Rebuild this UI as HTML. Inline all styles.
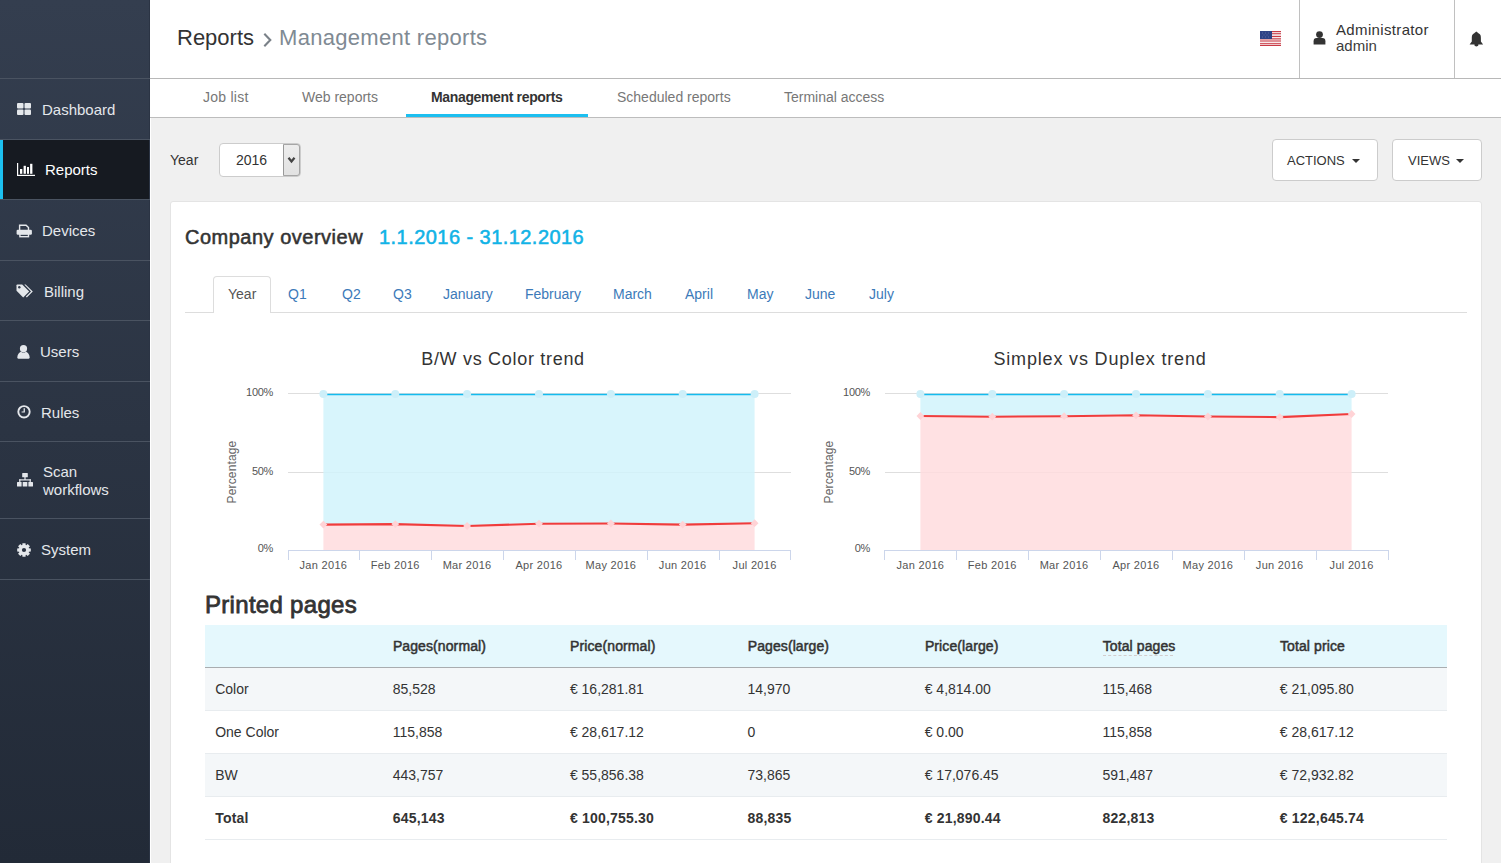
<!DOCTYPE html>
<html><head><meta charset="utf-8">
<style>
*{box-sizing:border-box;margin:0;padding:0}
html,body{width:1501px;height:863px;overflow:hidden;background:#f0f0f0;font-family:"Liberation Sans",sans-serif;color:#333}
.abs{position:absolute}
#side{position:absolute;left:0;top:0;width:150px;height:863px;background:linear-gradient(#343e4f,#222a37);border-right:1px solid #2b3444}
.sep{position:absolute;left:0;width:150px;height:1px;background:#4a5361;z-index:2}
.nav{position:absolute;left:0;width:149px;color:#e4e7eb;font-size:15px;line-height:17px}
.nav .t{position:absolute;white-space:nowrap}
.btn{position:absolute;top:139px;height:42px;background:#fff;border:1px solid #ccc;border-radius:4px;font-size:13px;color:#333}
.btn span{position:absolute;top:13px;white-space:nowrap}
.caret{position:absolute;top:19px;width:0;height:0;border-left:4px solid transparent;border-right:4px solid transparent;border-top:4px solid #333}
#card{position:absolute;left:170px;top:201px;width:1312px;height:700px;background:#fff;border:1px solid #e4e4e4;border-radius:3px}
.pt{position:absolute;top:286px;font-size:14px;line-height:16px;color:#3c7ab9;white-space:nowrap}
.nav svg{position:absolute;fill:#e4e7eb}
#hdr{position:absolute;left:150px;top:0;width:1351px;height:79px;background:#fff;border-bottom:1px solid #b8b8b8}
#tabs{position:absolute;left:150px;top:79px;width:1351px;height:39px;background:#fff;border-bottom:1px solid #bdbdbd}
.tab{position:absolute;top:10px;font-size:14px;line-height:16px;color:#777;white-space:nowrap}
.th{position:absolute;top:638px;font-size:14px;line-height:16px;letter-spacing:0.1px;-webkit-text-stroke:0.5px #333;color:#333;white-space:nowrap}
.td{position:absolute;font-size:14px;line-height:16px;color:#333;white-space:nowrap}
.td.b{font-weight:bold;letter-spacing:0.2px}
</style></head><body>
<div id="side">
  <div class="sep" style="top:78px"></div>
  <div class="nav" style="top:79px;height:60px">
    <svg style="left:17px;top:24px" width="14" height="12" viewBox="0 0 14 12"><rect x="0" y="0" width="6.5" height="5.5" rx="1"/><rect x="7.5" y="0" width="6.5" height="5.5" rx="1"/><rect x="0" y="6.5" width="6.5" height="5.5" rx="1"/><rect x="7.5" y="6.5" width="6.5" height="5.5" rx="1"/></svg>
    <span class="t" style="left:42px;top:22px">Dashboard</span>
  </div>
  <div class="sep" style="top:139px"></div>
  <div class="nav" style="top:140px;height:59px;background:#161a21;color:#fff">
    <div class="abs" style="left:0;top:0;width:3px;height:59px;background:#1cc0f0"></div>
    <svg style="left:17px;top:23px;fill:#fff" width="18" height="13" viewBox="0 0 18 13"><rect x="0" y="0" width="1.2" height="13"/><rect x="0" y="11.8" width="18" height="1.2"/><rect x="3" y="6" width="2.3" height="4.8"/><rect x="6.6" y="2.8" width="2.3" height="8"/><rect x="10" y="4" width="2" height="6.8"/><rect x="13.1" y="0.8" width="2.3" height="10"/></svg>
    <span class="t" style="left:45px;top:21px">Reports</span>
  </div>
  <div class="sep" style="top:199px"></div>
  <div class="nav" style="top:200px;height:60px">
    <svg style="left:16px;top:24px" width="17" height="14" viewBox="0 0 17 14"><path d="M3.6 6V1.2H10.1L12.5 3.6V6" fill="none" stroke="#e4e7eb" stroke-width="1.4"/><rect x="0.6" y="5.8" width="15.3" height="5" rx="1.2"/><rect x="3.9" y="9.6" width="8.6" height="3.1" fill="none" stroke="#e4e7eb" stroke-width="1.4"/></svg>
    <span class="t" style="left:42px;top:22px">Devices</span>
  </div>
  <div class="sep" style="top:260px"></div>
  <div class="nav" style="top:261px;height:59px">
    <svg style="left:16px;top:23px" width="18" height="15" viewBox="0 0 18 15"><path d="M0.5 1.3Q0.5 0.5 1.3 0.5H6.2L13.2 7.5 7.2 13.5 0.5 6.8z"/><path d="M8.3 0.5H9.6L16.8 7.5 10.8 13.5 9.9 12.6 15 7.5z"/><circle cx="3.3" cy="3.3" r="1.2" fill="#323b4a"/></svg>
    <span class="t" style="left:44px;top:22px">Billing</span>
  </div>
  <div class="sep" style="top:320px"></div>
  <div class="nav" style="top:321px;height:60px">
    <svg style="left:16.5px;top:23.5px" width="13" height="14" viewBox="0 0 13 14"><circle cx="6.5" cy="3.7" r="3.6"/><path d="M0.3 12.6C0.3 9.3 2.2 7.2 4 6.7 4.8 7.3 5.6 7.6 6.5 7.6S8.2 7.3 9 6.7C10.8 7.2 12.7 9.3 12.7 12.6 12.7 13.3 12.3 13.7 11.6 13.7H1.4C.7 13.7.3 13.3.3 12.6z"/></svg>
    <span class="t" style="left:40px;top:22px">Users</span>
  </div>
  <div class="sep" style="top:381px"></div>
  <div class="nav" style="top:382px;height:59px">
    <svg style="left:16.5px;top:23px" width="14" height="14" viewBox="0 0 14 14"><circle cx="7" cy="6.8" r="5.7" fill="none" stroke="#e4e7eb" stroke-width="1.9"/><path d="M6.6 3.3h1.3v4.3H4.6V6.4h2z"/></svg>
    <span class="t" style="left:41px;top:22px">Rules</span>
  </div>
  <div class="sep" style="top:441px"></div>
  <div class="nav" style="top:442px;height:76px">
    <svg style="left:16.5px;top:30.5px" width="16" height="14" viewBox="0 0 16 14"><rect x="5.2" y="0" width="5.6" height="4.3" rx="0.6"/><rect x="7.4" y="4" width="1.2" height="3"/><rect x="2.2" y="6.3" width="11.6" height="1.2"/><rect x="2.2" y="6.3" width="1.2" height="3"/><rect x="12.6" y="6.3" width="1.2" height="3"/><rect x="0" y="9" width="4.6" height="4.6" rx="0.5"/><rect x="5.7" y="9" width="4.6" height="4.6" rx="0.5"/><rect x="11.4" y="9" width="4.6" height="4.6" rx="0.5"/></svg>
    <span class="t" style="left:43px;top:21px;line-height:18px">Scan<br>workflows</span>
  </div>
  <div class="sep" style="top:518px"></div>
  <div class="nav" style="top:519px;height:60px">
    <svg style="left:16.5px;top:23.5px" width="14" height="14" viewBox="0 0 14 14"><path fill-rule="evenodd" d="M11.92 5.31 L13.82 5.43 L13.82 8.57 L11.92 8.69 L11.67 9.28 L12.94 10.71 L10.71 12.94 L9.28 11.67 L8.69 11.92 L8.57 13.82 L5.43 13.82 L5.31 11.92 L4.72 11.67 L3.29 12.94 L1.06 10.71 L2.33 9.28 L2.08 8.69 L0.18 8.57 L0.18 5.43 L2.08 5.31 L2.33 4.72 L1.06 3.29 L3.29 1.06 L4.72 2.33 L5.31 2.08 L5.43 0.18 L8.57 0.18 L8.69 2.08 L9.28 2.33 L10.71 1.06 L12.94 3.29 L11.67 4.72Z M7 4.9A2.1 2.1 0 1 0 7 9.1A2.1 2.1 0 1 0 7 4.9Z"/></svg>
    <span class="t" style="left:41px;top:22px">System</span>
  </div>
  <div class="sep" style="top:579px"></div>
</div>

<div id="hdr">
  <div class="abs" style="left:27px;top:25px;font-size:22px;line-height:25px;white-space:nowrap;color:#333">Reports</div>
  <svg class="abs" style="left:113px;top:33px" width="9" height="14" viewBox="0 0 9 14"><path d="M1.3 0.8l6 6.2-6 6.2" fill="none" stroke="#7a8188" stroke-width="2.1"/></svg>
  <div class="abs" style="left:129px;top:25px;font-size:22px;line-height:25px;letter-spacing:0.3px;white-space:nowrap;color:#808a93">Management reports</div>
</div>

<div id="tabs">
  <span class="tab" style="left:53px;letter-spacing:0.25px">Job list</span>
  <span class="tab" style="left:152px">Web reports</span>
  <span class="tab" style="left:281px;color:#333;font-weight:bold;letter-spacing:-0.35px">Management reports</span>
  <div class="abs" style="left:256px;top:35px;width:182px;height:3px;background:#1cbff0"></div>
  <span class="tab" style="left:467px">Scheduled reports</span>
  <span class="tab" style="left:634px">Terminal access</span>
</div>

<div id="hdrR">
  <svg class="abs" style="left:1260px;top:31px" width="21" height="15" viewBox="0 0 21 15">
    <rect width="21" height="15" fill="#f7e9ea"/>
    <g fill="#c93a45"><rect y="0" width="21" height="1.1"/><rect y="2.2" width="21" height="1"/><rect y="4.9" width="21" height="1.1"/><rect y="7.3" width="21" height="1.1"/><rect y="9.5" width="21" height="1"/><rect y="12.2" width="21" height="1"/><rect y="14" width="21" height="1"/></g>
    <rect width="12" height="8" fill="#2e4285"/>
    <g fill="#5b68a0"><rect x="2" y="1.5" width="1" height="1"/><rect x="5" y="1.5" width="1" height="1"/><rect x="8" y="1.5" width="1" height="1"/><rect x="3.5" y="3.5" width="1" height="1"/><rect x="6.5" y="3.5" width="1" height="1"/><rect x="2" y="5.5" width="1" height="1"/><rect x="5" y="5.5" width="1" height="1"/><rect x="8" y="5.5" width="1" height="1"/></g>
  </svg>
  <div class="abs" style="left:1299px;top:0;width:1px;height:78px;background:#c0c0c0"></div>
  <div class="abs" style="left:1454px;top:0;width:1px;height:78px;background:#c0c0c0"></div>
  <svg class="abs" style="left:1313px;top:30.5px" width="13" height="14" viewBox="0 0 13 14"><circle cx="6.5" cy="3.6" r="3.4" fill="#333"/><path d="M0.6 13.4V10.2Q0.6 6.9 3.6 6.9H9.4Q12.4 6.9 12.4 10.2V13.4z" fill="#333"/></svg>
  <div class="abs" style="left:1336px;top:21px;font-size:15px;line-height:17px;letter-spacing:0.35px;color:#333;white-space:nowrap">Administrator</div>
  <div class="abs" style="left:1336px;top:37px;font-size:15px;line-height:17px;color:#3c3c3c;white-space:nowrap">admin</div>
  <svg class="abs" style="left:1469px;top:30.5px" width="15" height="16" viewBox="0 0 15 16"><path d="M7.3 0.4C8.2 0.9 8.8 2 10.6 2.9 11.6 3.6 11.9 5 11.9 7.2V10.5L14.1 13.6H0.6L2.8 10.5V7.2C2.8 5 3.1 3.6 4.1 2.9 5.9 2 6.5 0.9 7.3 0.4zM5.5 13.4H9.3V14.3C9.3 15 8.4 15.4 7.4 15.4S5.5 15 5.5 14.3z" fill="#333"/></svg>
</div>

<div class="abs" style="left:170px;top:152px;font-size:14px;line-height:16px;color:#333">Year</div>
<div class="abs" style="left:219px;top:143px;width:82px;height:34px;background:#fff;border:1px solid #ccc;border-radius:4px"></div>
<div class="abs" style="left:236px;top:152px;font-size:14px;line-height:16px;color:#333">2016</div>
<div class="abs" style="left:283px;top:144px;width:17px;height:32px;background:linear-gradient(#ededed,#e2e2e2);border:1px solid #a6a6a6;border-left-color:#999;border-radius:0 3px 3px 0"></div>
<svg class="abs" style="left:287px;top:156px" width="9" height="8" viewBox="0 0 9 8"><path d="M1.5 1.8l3 3.6 3-3.6" fill="none" stroke="#444" stroke-width="2.3"/></svg>

<div class="btn" style="left:1272px;width:106px"><span style="left:14px">ACTIONS</span><div class="caret" style="left:79px"></div></div>
<div class="btn" style="left:1392px;width:90px"><span style="left:15px">VIEWS</span><div class="caret" style="left:63px"></div></div>

<div class="abs" style="left:150px;top:118px;width:1px;height:745px;background:#fff"></div>
<div id="card"></div>
<div class="abs" style="left:185px;top:226px;font-size:20px;line-height:22px;letter-spacing:0.5px;-webkit-text-stroke:0.55px #333;color:#333;white-space:nowrap">Company overview</div>
<div class="abs" style="left:379px;top:225.5px;font-size:20px;line-height:22px;letter-spacing:0.45px;color:#12b3e6;-webkit-text-stroke:0.55px #12b3e6;white-space:nowrap">1.1.2016 - 31.12.2016</div>

<div class="abs" style="left:185px;top:312px;width:1282px;height:1px;background:#ddd"></div>
<div class="abs" style="left:213px;top:276px;width:58px;height:37px;background:#fff;border:1px solid #ddd;border-bottom:none;border-radius:4px 4px 0 0"></div>
<span class="pt" style="left:228px;color:#555">Year</span>
<span class="pt" style="left:288px">Q1</span>
<span class="pt" style="left:342px">Q2</span>
<span class="pt" style="left:393px">Q3</span>
<span class="pt" style="left:443px">January</span>
<span class="pt" style="left:525px">February</span>
<span class="pt" style="left:613px">March</span>
<span class="pt" style="left:685px">April</span>
<span class="pt" style="left:747px">May</span>
<span class="pt" style="left:805px">June</span>
<span class="pt" style="left:869px">July</span>

<!--CHARTS-->
<svg class="abs" style="left:0;top:0" width="1501" height="863" viewBox="0 0 1501 863" font-family="Liberation Sans, sans-serif">
<text x="503" y="365" text-anchor="middle" font-size="18" letter-spacing="0.7" fill="#333">B/W vs Color trend</text>
<path d="M288 393.5H791M288 472.5H791" stroke="#dedede" stroke-width="1" fill="none"/>
<path d="M323.4 394.4 L323.4 394.4 L395.3 394.4 L467.1 394.4 L539.0 394.4 L610.9 394.4 L682.7 394.4 L754.6 394.4 L754.6 523.2 L682.7 524.6 L610.9 523.5 L539.0 523.7 L467.1 526.0 L395.3 524.1 L323.4 524.6 Z" fill="#d1f3fc" fill-opacity="0.85"/>
<path d="M323.4 550.0 L323.4 524.6 L395.3 524.1 L467.1 526.0 L539.0 523.7 L610.9 523.5 L682.7 524.6 L754.6 523.2 L754.6 550.0 Z" fill="#ffdcde" fill-opacity="0.85"/>
<path d="M323.4 394.5 H754.6" stroke="#14bbee" stroke-width="1.3" fill="none"/>
<path d="M323.4 524.6 L395.3 524.1 L467.1 526.0 L539.0 523.7 L610.9 523.5 L682.7 524.6 L754.6 523.2" stroke="#f03c3c" stroke-width="2.1" fill="none" stroke-linejoin="round"/>
<circle cx="323.4" cy="394" r="4" fill="#cdeff9"/>
<circle cx="395.3" cy="394" r="4" fill="#cdeff9"/>
<circle cx="467.1" cy="394" r="4" fill="#cdeff9"/>
<circle cx="539.0" cy="394" r="4" fill="#cdeff9"/>
<circle cx="610.9" cy="394" r="4" fill="#cdeff9"/>
<circle cx="682.7" cy="394" r="4" fill="#cdeff9"/>
<circle cx="754.6" cy="394" r="4" fill="#cdeff9"/>
<path d="M323.4 520.7L327.3 524.6L323.4 528.5L319.5 524.6Z" fill="#ffd3d6"/>
<path d="M395.3 520.2L399.2 524.1L395.3 528.0L391.4 524.1Z" fill="#ffd3d6"/>
<path d="M467.1 522.1L471.0 526.0L467.1 529.9L463.2 526.0Z" fill="#ffd3d6"/>
<path d="M539.0 519.8L542.9 523.7L539.0 527.6L535.1 523.7Z" fill="#ffd3d6"/>
<path d="M610.9 519.6L614.8 523.5L610.9 527.4L607.0 523.5Z" fill="#ffd3d6"/>
<path d="M682.7 520.7L686.6 524.6L682.7 528.5L678.8 524.6Z" fill="#ffd3d6"/>
<path d="M754.6 519.3L758.5 523.2L754.6 527.1L750.7 523.2Z" fill="#ffd3d6"/>
<path d="M288 550.5H791M288.5 550V560M359.5 550V560M431.5 550V560M503.5 550V560M575.5 550V560M647.5 550V560M719.5 550V560M790.5 550V560" stroke="#ccd6eb" stroke-width="1" fill="none"/>
<text x="323.4" y="569" text-anchor="middle" font-size="11" fill="#555" letter-spacing="0.3">Jan 2016</text>
<text x="395.3" y="569" text-anchor="middle" font-size="11" fill="#555" letter-spacing="0.3">Feb 2016</text>
<text x="467.1" y="569" text-anchor="middle" font-size="11" fill="#555" letter-spacing="0.3">Mar 2016</text>
<text x="539.0" y="569" text-anchor="middle" font-size="11" fill="#555" letter-spacing="0.3">Apr 2016</text>
<text x="610.9" y="569" text-anchor="middle" font-size="11" fill="#555" letter-spacing="0.3">May 2016</text>
<text x="682.7" y="569" text-anchor="middle" font-size="11" fill="#555" letter-spacing="0.3">Jun 2016</text>
<text x="754.6" y="569" text-anchor="middle" font-size="11" fill="#555" letter-spacing="0.3">Jul 2016</text>
<text x="273" y="396" text-anchor="end" font-size="11" letter-spacing="-0.3" fill="#555">100%</text>
<text x="273" y="474.5" text-anchor="end" font-size="11" letter-spacing="-0.3" fill="#555">50%</text>
<text x="273" y="552" text-anchor="end" font-size="11" letter-spacing="-0.3" fill="#555">0%</text>
<text transform="translate(235.5 472) rotate(-90)" text-anchor="middle" font-size="12" letter-spacing="0.15" fill="#666">Percentage</text>
<text x="1100" y="365" text-anchor="middle" font-size="18" letter-spacing="0.83" fill="#333">Simplex vs Duplex trend</text>
<path d="M885 393.5H1388M885 472.5H1388" stroke="#dedede" stroke-width="1" fill="none"/>
<path d="M920.4 394.4 L920.4 394.4 L992.3 394.4 L1064.1 394.4 L1136.0 394.4 L1207.9 394.4 L1279.7 394.4 L1351.6 394.4 L1351.6 414.0 L1279.7 417.1 L1207.9 416.5 L1136.0 415.3 L1064.1 416.2 L992.3 416.7 L920.4 416.0 Z" fill="#d1f3fc" fill-opacity="0.85"/>
<path d="M920.4 550.0 L920.4 416.0 L992.3 416.7 L1064.1 416.2 L1136.0 415.3 L1207.9 416.5 L1279.7 417.1 L1351.6 414.0 L1351.6 550.0 Z" fill="#ffdcde" fill-opacity="0.85"/>
<path d="M920.4 394.5 H1351.6" stroke="#14bbee" stroke-width="1.3" fill="none"/>
<path d="M920.4 416.0 L992.3 416.7 L1064.1 416.2 L1136.0 415.3 L1207.9 416.5 L1279.7 417.1 L1351.6 414.0" stroke="#f03c3c" stroke-width="2.1" fill="none" stroke-linejoin="round"/>
<circle cx="920.4" cy="394" r="4" fill="#cdeff9"/>
<circle cx="992.3" cy="394" r="4" fill="#cdeff9"/>
<circle cx="1064.1" cy="394" r="4" fill="#cdeff9"/>
<circle cx="1136.0" cy="394" r="4" fill="#cdeff9"/>
<circle cx="1207.9" cy="394" r="4" fill="#cdeff9"/>
<circle cx="1279.7" cy="394" r="4" fill="#cdeff9"/>
<circle cx="1351.6" cy="394" r="4" fill="#cdeff9"/>
<path d="M920.4 412.1L924.3 416.0L920.4 419.9L916.5 416.0Z" fill="#ffd3d6"/>
<path d="M992.3 412.8L996.2 416.7L992.3 420.6L988.4 416.7Z" fill="#ffd3d6"/>
<path d="M1064.1 412.3L1068.0 416.2L1064.1 420.1L1060.2 416.2Z" fill="#ffd3d6"/>
<path d="M1136.0 411.4L1139.9 415.3L1136.0 419.2L1132.1 415.3Z" fill="#ffd3d6"/>
<path d="M1207.9 412.6L1211.8 416.5L1207.9 420.4L1204.0 416.5Z" fill="#ffd3d6"/>
<path d="M1279.7 413.2L1283.6 417.1L1279.7 421.0L1275.8 417.1Z" fill="#ffd3d6"/>
<path d="M1351.6 410.1L1355.5 414.0L1351.6 417.9L1347.7 414.0Z" fill="#ffd3d6"/>
<path d="M885 550.5H1388M884.5 550V560M956.5 550V560M1028.5 550V560M1100.5 550V560M1172.5 550V560M1244.5 550V560M1316.5 550V560M1388.5 550V560" stroke="#ccd6eb" stroke-width="1" fill="none"/>
<text x="920.4" y="569" text-anchor="middle" font-size="11" fill="#555" letter-spacing="0.3">Jan 2016</text>
<text x="992.3" y="569" text-anchor="middle" font-size="11" fill="#555" letter-spacing="0.3">Feb 2016</text>
<text x="1064.1" y="569" text-anchor="middle" font-size="11" fill="#555" letter-spacing="0.3">Mar 2016</text>
<text x="1136.0" y="569" text-anchor="middle" font-size="11" fill="#555" letter-spacing="0.3">Apr 2016</text>
<text x="1207.9" y="569" text-anchor="middle" font-size="11" fill="#555" letter-spacing="0.3">May 2016</text>
<text x="1279.7" y="569" text-anchor="middle" font-size="11" fill="#555" letter-spacing="0.3">Jun 2016</text>
<text x="1351.6" y="569" text-anchor="middle" font-size="11" fill="#555" letter-spacing="0.3">Jul 2016</text>
<text x="870" y="396" text-anchor="end" font-size="11" letter-spacing="-0.3" fill="#555">100%</text>
<text x="870" y="474.5" text-anchor="end" font-size="11" letter-spacing="-0.3" fill="#555">50%</text>
<text x="870" y="552" text-anchor="end" font-size="11" letter-spacing="-0.3" fill="#555">0%</text>
<text transform="translate(832.5 472) rotate(-90)" text-anchor="middle" font-size="12" letter-spacing="0.15" fill="#666">Percentage</text>
</svg>
<!--/CHARTS-->
<!--TABLE-->
<div class="abs" style="left:205px;top:591px;font-size:24px;line-height:28px;letter-spacing:0.3px;-webkit-text-stroke:0.8px #333;color:#333;white-space:nowrap">Printed pages</div>
<div class="abs" style="left:205px;top:625px;width:1242px;height:42px;background:#e5f8fd"></div>
<div class="abs" style="left:205px;top:667px;width:1242px;height:1px;background:#a9adb0"></div>
<div class="th" style="left:392.9px">Pages(normal)</div>
<div class="th" style="left:570.1px">Price(normal)</div>
<div class="th" style="left:747.7px">Pages(large)</div>
<div class="th" style="left:924.9px">Price(large)</div>
<div class="th" style="left:1102.7px">Total pages</div>
<div class="th" style="left:1280.0px">Total price</div>
<div class="abs" style="left:1103px;top:655px;width:70px;height:0;border-top:1px dashed #d3cdcd"></div>
<div class="abs" style="left:205px;top:668px;width:1242px;height:42px;background:#f4f7f9"></div>
<div class="abs" style="left:205px;top:710px;width:1242px;height:1px;background:#e8ecef"></div>
<div class="td" style="left:215.2px;top:681px">Color</div>
<div class="td" style="left:392.7px;top:681px">85,528</div>
<div class="td" style="left:569.9px;top:681px">€ 16,281.81</div>
<div class="td" style="left:747.5px;top:681px">14,970</div>
<div class="td" style="left:924.7px;top:681px">€ 4,814.00</div>
<div class="td" style="left:1102.5px;top:681px">115,468</div>
<div class="td" style="left:1279.8px;top:681px">€ 21,095.80</div>
<div class="abs" style="left:205px;top:711px;width:1242px;height:42px;background:#fff"></div>
<div class="abs" style="left:205px;top:753px;width:1242px;height:1px;background:#e8ecef"></div>
<div class="td" style="left:215.2px;top:724px">One Color</div>
<div class="td" style="left:392.7px;top:724px">115,858</div>
<div class="td" style="left:569.9px;top:724px">€ 28,617.12</div>
<div class="td" style="left:747.5px;top:724px">0</div>
<div class="td" style="left:924.7px;top:724px">€ 0.00</div>
<div class="td" style="left:1102.5px;top:724px">115,858</div>
<div class="td" style="left:1279.8px;top:724px">€ 28,617.12</div>
<div class="abs" style="left:205px;top:754px;width:1242px;height:42px;background:#f4f7f9"></div>
<div class="abs" style="left:205px;top:796px;width:1242px;height:1px;background:#e8ecef"></div>
<div class="td" style="left:215.2px;top:767px">BW</div>
<div class="td" style="left:392.7px;top:767px">443,757</div>
<div class="td" style="left:569.9px;top:767px">€ 55,856.38</div>
<div class="td" style="left:747.5px;top:767px">73,865</div>
<div class="td" style="left:924.7px;top:767px">€ 17,076.45</div>
<div class="td" style="left:1102.5px;top:767px">591,487</div>
<div class="td" style="left:1279.8px;top:767px">€ 72,932.82</div>
<div class="abs" style="left:205px;top:797px;width:1242px;height:42px;background:#fff"></div>
<div class="abs" style="left:205px;top:839px;width:1242px;height:1px;background:#e8ecef"></div>
<div class="td b" style="left:215.2px;top:810px">Total</div>
<div class="td b" style="left:392.7px;top:810px">645,143</div>
<div class="td b" style="left:569.9px;top:810px">€ 100,755.30</div>
<div class="td b" style="left:747.5px;top:810px">88,835</div>
<div class="td b" style="left:924.7px;top:810px">€ 21,890.44</div>
<div class="td b" style="left:1102.5px;top:810px">822,813</div>
<div class="td b" style="left:1279.8px;top:810px">€ 122,645.74</div>
<!--/TABLE-->
</body></html>
